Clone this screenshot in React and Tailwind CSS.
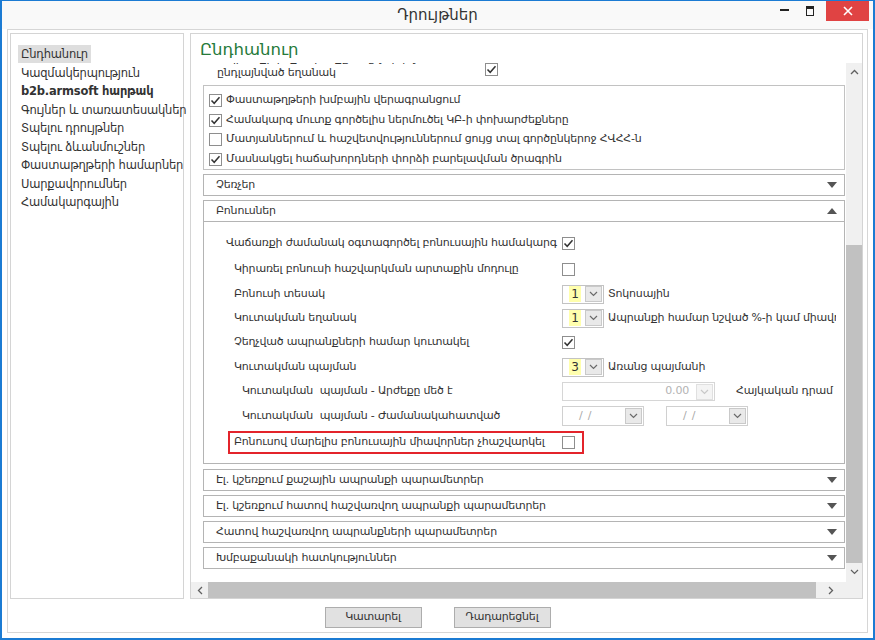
import React from 'react';

const Check = ({ checked }) => (
  <span className="w-[13px] h-[13px] border border-[#8e8e8e] bg-white flex items-center justify-center shrink-0">
    {checked && (
      <svg width="11" height="11" viewBox="0 0 11 11">
        <path d="M1.5 5.5 L4.2 8.3 L9.5 2.2" fill="none" stroke="#333" strokeWidth="1.5" />
      </svg>
    )}
  </span>
);

const Chevron = ({ color = '#666' }) => (
  <svg width="9" height="6" viewBox="0 0 9 6">
    <path d="M1 1 L4.5 4.5 L8 1" fill="none" stroke={color} strokeWidth="1.2" />
  </svg>
);

const DropBtn = ({ disabled }) => (
  <span
    className={
      'w-[17px] h-[16px] flex items-center justify-center border shrink-0 ' +
      (disabled ? 'bg-[#f4f4f4] border-[#e0e0e0]' : 'bg-[#e9e9e9] border-[#c9c9c9]')
    }
  >
    <Chevron color={disabled ? '#c8c8c8' : '#6a6a6a'} />
  </span>
);

const Combo = ({ value, label }) => (
  <div className="flex items-center">
    <div className="w-[42px] h-[19px] border border-[#c3c3c3] bg-white flex items-center justify-between pl-[6px] pr-px">
      <span className="bg-[#ffffad] h-[16px] w-[12px] flex items-center justify-center text-[12px] tracking-normal">{value}</span>
      <DropBtn />
    </div>
    <span className="ml-[4px] whitespace-nowrap overflow-hidden w-[228px]">{label}</span>
  </div>
);

const Tri = ({ up }) => (
  <svg width="10" height="6" viewBox="0 0 10 6">
    <path d={up ? 'M0 6 L5 0 L10 6 Z' : 'M0 0 L10 0 L5 6 Z'} fill="#555" />
  </svg>
);

const Header = ({ title, up, className = '' }) => (
  <div className={'h-[22px] border border-[#b4b4b4] flex items-center justify-between pl-[12px] pr-[7px] ' + className}>
    <span>{title}</span>
    <Tri up={up} />
  </div>
);

const menu = [
  'Ընդհանուր',
  'Կազմակերպություն',
  'b2b.armsoft հարթակ',
  'Գույներ և տառատեսակներ',
  'Տպելու դրույթներ',
  'Տպելու ձևանմուշներ',
  'Փաստաթղթերի համարներ',
  'Սարքավորումներ',
  'Համակարգային',
];

const groupRows = [
  { t: 'Փաստաթղթերի խմբային վերագրանցում', c: true, h: 'h-[19px]' },
  { t: 'Համակարգ մուտք գործելիս ներմուծել ԿԲ-ի փոխարժեքները', c: true, h: 'h-[20px]' },
  { t: 'Մատյաններում և հաշվետվություններում ցույց տալ գործընկերոջ ՀՎՀՀ-ն', c: false, h: 'h-[19px]' },
  { t: 'Մասնակցել հաճախորդների փորձի բարելավման ծրագրին', c: true, h: 'h-[20px]' },
];

const Row = ({ h, pl, label, children }) => (
  <div className={'flex items-center ' + h}>
    <div className={'w-[358px] shrink-0 whitespace-pre ' + pl}>{label}</div>
    {children}
  </div>
);

export default function App() {
  return (
    <div className="w-[875px] h-[640px] bg-white border-x-2 border-t border-b-2 border-[#1b7bd3] flex flex-col font-['DejaVu_Sans',sans-serif] text-[11px] tracking-[-0.2px] text-[#333] overflow-hidden">
      {/* title bar */}
      <div className="h-[28px] shrink-0 bg-[#f9f9f9] relative flex items-center justify-center">
        <span className="text-[15px] tracking-normal text-[#333] mt-[1px]">Դրույթներ</span>
        <div className="absolute right-[4px] top-0 flex items-start">
          <div className="w-[12px] h-[18px] flex items-center justify-center mr-[14px]">
            <span className="w-[9px] h-[2px] bg-[#222]" />
          </div>
          <div className="w-[12px] h-[20px] flex items-center justify-center mr-[10px]">
            <span className="w-[8px] h-[10px] border border-[#222] border-t-[3px]" />
          </div>
          <div className="w-[43px] h-[20px] bg-[#e04343] flex items-center justify-center">
            <svg width="10" height="10" viewBox="0 0 10 10">
              <path d="M1 1 L9 9 M9 1 L1 9" stroke="#fff" strokeWidth="1.6" />
            </svg>
          </div>
        </div>
      </div>

      {/* frame */}
      <div className="mx-[5px] h-[604px] border border-[#d6d6d6] flex flex-col">
        <div className="flex gap-[6px] px-[2px] pt-[3px] h-[569px]">
          {/* left menu */}
          <div className="w-[174px] h-[566px] border border-[#d4d4d4] pl-[7px] pt-[11px] shrink-0">
            {menu.map((m, i) => (
              <div key={m} className="h-[18.5px] leading-[18.5px] text-[11.5px] whitespace-nowrap">
                <span className={'px-[3px] py-[2px] ' + (i === 0 ? 'bg-[#dedede]' : '') + (i === 2 ? ' font-bold' : '')}>{m}</span>
              </div>
            ))}
          </div>

          {/* right panel */}
          <div className="w-[673px] h-[566px] border border-[#d4d4d4] flex flex-col">
            <div className="h-[29px] shrink-0 pl-[9px] pt-[4px] text-[16.5px] tracking-normal text-[#267a3a] leading-[24px] relative z-10 bg-white">Ընդհանուր</div>
            <div className="flex h-[519px]">
              {/* viewport */}
              <div className="w-[655px] h-[519px] overflow-hidden">
                <div className="w-[654px] pl-[12px] flex flex-col">
                  {/* partially scrolled block */}
                  <div className="h-[22px] flex items-start">
                    <div className="w-[282px] pl-[14px] leading-[14px] mt-[-11px]">
                      <div className="whitespace-nowrap">Ապրանքի ինքնարժեքը հաշվարկել</div>
                      <div className="whitespace-nowrap">ընդլայնված եղանակ</div>
                    </div>
                    <Check checked />
                  </div>

                  {/* group box */}
                  <div className="h-[85px] border border-[#c2c2c2] pl-[5px] pt-[5px]">
                    {groupRows.map((r) => (
                      <div key={r.t} className={'flex items-center gap-[4px] ' + r.h}>
                        <Check checked={r.c} />
                        <span className="whitespace-nowrap">{r.t}</span>
                      </div>
                    ))}
                  </div>

                  <Header title="Չեռչեր" className="mt-[4px]" />

                  {/* bonuses */}
                  <div className="mt-[4px] h-[264px] border border-[#b4b4b4] flex flex-col">
                    <div className="h-[21px] border-b border-[#b4b4b4] flex items-center justify-between pl-[12px] pr-[7px]">
                      <span>Բոնուսներ</span>
                      <Tri up />
                    </div>
                    <div className="pt-[8px] flex flex-col">
                      <Row h="h-[26px]" pl="pl-[22px]" label="Վաճառքի ժամանակ օգտագործել բոնուսային համակարգ">
                        <Check checked />
                      </Row>
                      <Row h="h-[26px]" pl="pl-[30px]" label="Կիրառել բոնուսի հաշվարկման արտաքին մոդուլը">
                        <Check />
                      </Row>
                      <Row h="h-[24px]" pl="pl-[30px]" label="Բոնուսի տեսակ">
                        <Combo value="1" label="Տոկոսային" />
                      </Row>
                      <Row h="h-[24px]" pl="pl-[30px]" label="Կուտակման եղանակ">
                        <Combo value="1" label="Ապրանքի համար նշված %-ի կամ միավորի" />
                      </Row>
                      <Row h="h-[25px]" pl="pl-[30px]" label="Չեղչված ապրանքների համար կուտակել">
                        <Check checked />
                      </Row>
                      <Row h="h-[24px]" pl="pl-[30px]" label="Կուտակման պայման">
                        <Combo value="3" label="Առանց պայմանի" />
                      </Row>
                      <Row h="h-[25px]" pl="pl-[38px]" label="Կուտակման  պայման - Արժեքը մեծ է">
                        <div className="w-[153px] h-[19px] border border-[#d6d6d6] flex items-center justify-end pr-px">
                          <span className="text-[#b3b3b3] mr-[7px]">0.00</span>
                          <DropBtn disabled />
                        </div>
                        <span className="ml-[21px] whitespace-nowrap">Հայկական դրամ</span>
                      </Row>
                      <Row h="h-[24px]" pl="pl-[38px]" label="Կուտակման  պայման - Ժամանակահատված">
                        <div className="w-[82px] h-[20px] border border-[#d0d0d0] flex items-center justify-between pl-[16px] pr-px">
                          <span className="text-[#aaa] tracking-[5px]">//</span>
                          <DropBtn />
                        </div>
                        <div className="ml-[22px] w-[82px] h-[20px] border border-[#d0d0d0] flex items-center justify-between pl-[16px] pr-px">
                          <span className="text-[#aaa] tracking-[5px]">//</span>
                          <DropBtn />
                        </div>
                      </Row>
                      <div className="mt-[3px] ml-[24px] w-[356px] h-[23px] border-2 border-[#e3242b] flex items-center">
                        <div className="w-[332px] pl-[4px] whitespace-nowrap">Բոնուսով մարելիս բոնուսային միավորներ չհաշվարկել</div>
                        <Check />
                      </div>
                    </div>
                  </div>

                  <Header title="Էլ. կշեռքում քաշային ապրանքի պարամետրեր" className="mt-[5px]" />
                  <Header title="Էլ. կշեռքում հատով հաշվառվող ապրանքի պարամետրեր" className="mt-[4px]" />
                  <Header title="Հատով հաշվառվող ապրանքների պարամետրեր" className="mt-[4px]" />
                  <Header title="Խմբաքանակի հատկություններ" className="mt-[4px]" />
                </div>
              </div>

              {/* vertical scrollbar */}
              <div className="w-[16px] h-[519px] bg-[#f0f0f0] flex flex-col items-center">
                <div className="h-[17px] flex items-center justify-center">
                  <svg width="9" height="6" viewBox="0 0 9 6">
                    <path d="M1 5 L4.5 1.5 L8 5" fill="none" stroke="#606060" strokeWidth="1.3" />
                  </svg>
                </div>
                <div className="h-[165px]" />
                <div className="w-[16px] h-[318px] bg-[#c1c1c1]" />
                <div className="h-[17px] flex items-center justify-center">
                  <Chevron color="#606060" />
                </div>
              </div>
            </div>

            {/* horizontal scrollbar */}
            <div className="h-[16px] flex bg-[#f0f0f0]">
              <div className="w-[17px] flex items-center justify-center">
                <svg width="6" height="9" viewBox="0 0 6 9">
                  <path d="M5 1 L1.5 4.5 L5 8" fill="none" stroke="#606060" strokeWidth="1.3" />
                </svg>
              </div>
              <div className="w-[608px] bg-[#c1c1c1]" />
              <div className="w-[30px] flex items-center justify-center">
                <svg width="6" height="9" viewBox="0 0 6 9">
                  <path d="M1 1 L4.5 4.5 L1 8" fill="none" stroke="#606060" strokeWidth="1.3" />
                </svg>
              </div>
            </div>
          </div>
        </div>

        {/* footer */}
        <div className="flex-1 flex justify-center items-start pt-[8px] gap-[32px]">
          <button className="w-[97px] h-[21px] bg-[#e1e1e1] border border-[#adadad] text-[11px]">Կատարել</button>
          <button className="w-[97px] h-[21px] bg-[#e1e1e1] border border-[#adadad] text-[11px]">Դադարեցնել</button>
        </div>
      </div>
    </div>
  );
}
